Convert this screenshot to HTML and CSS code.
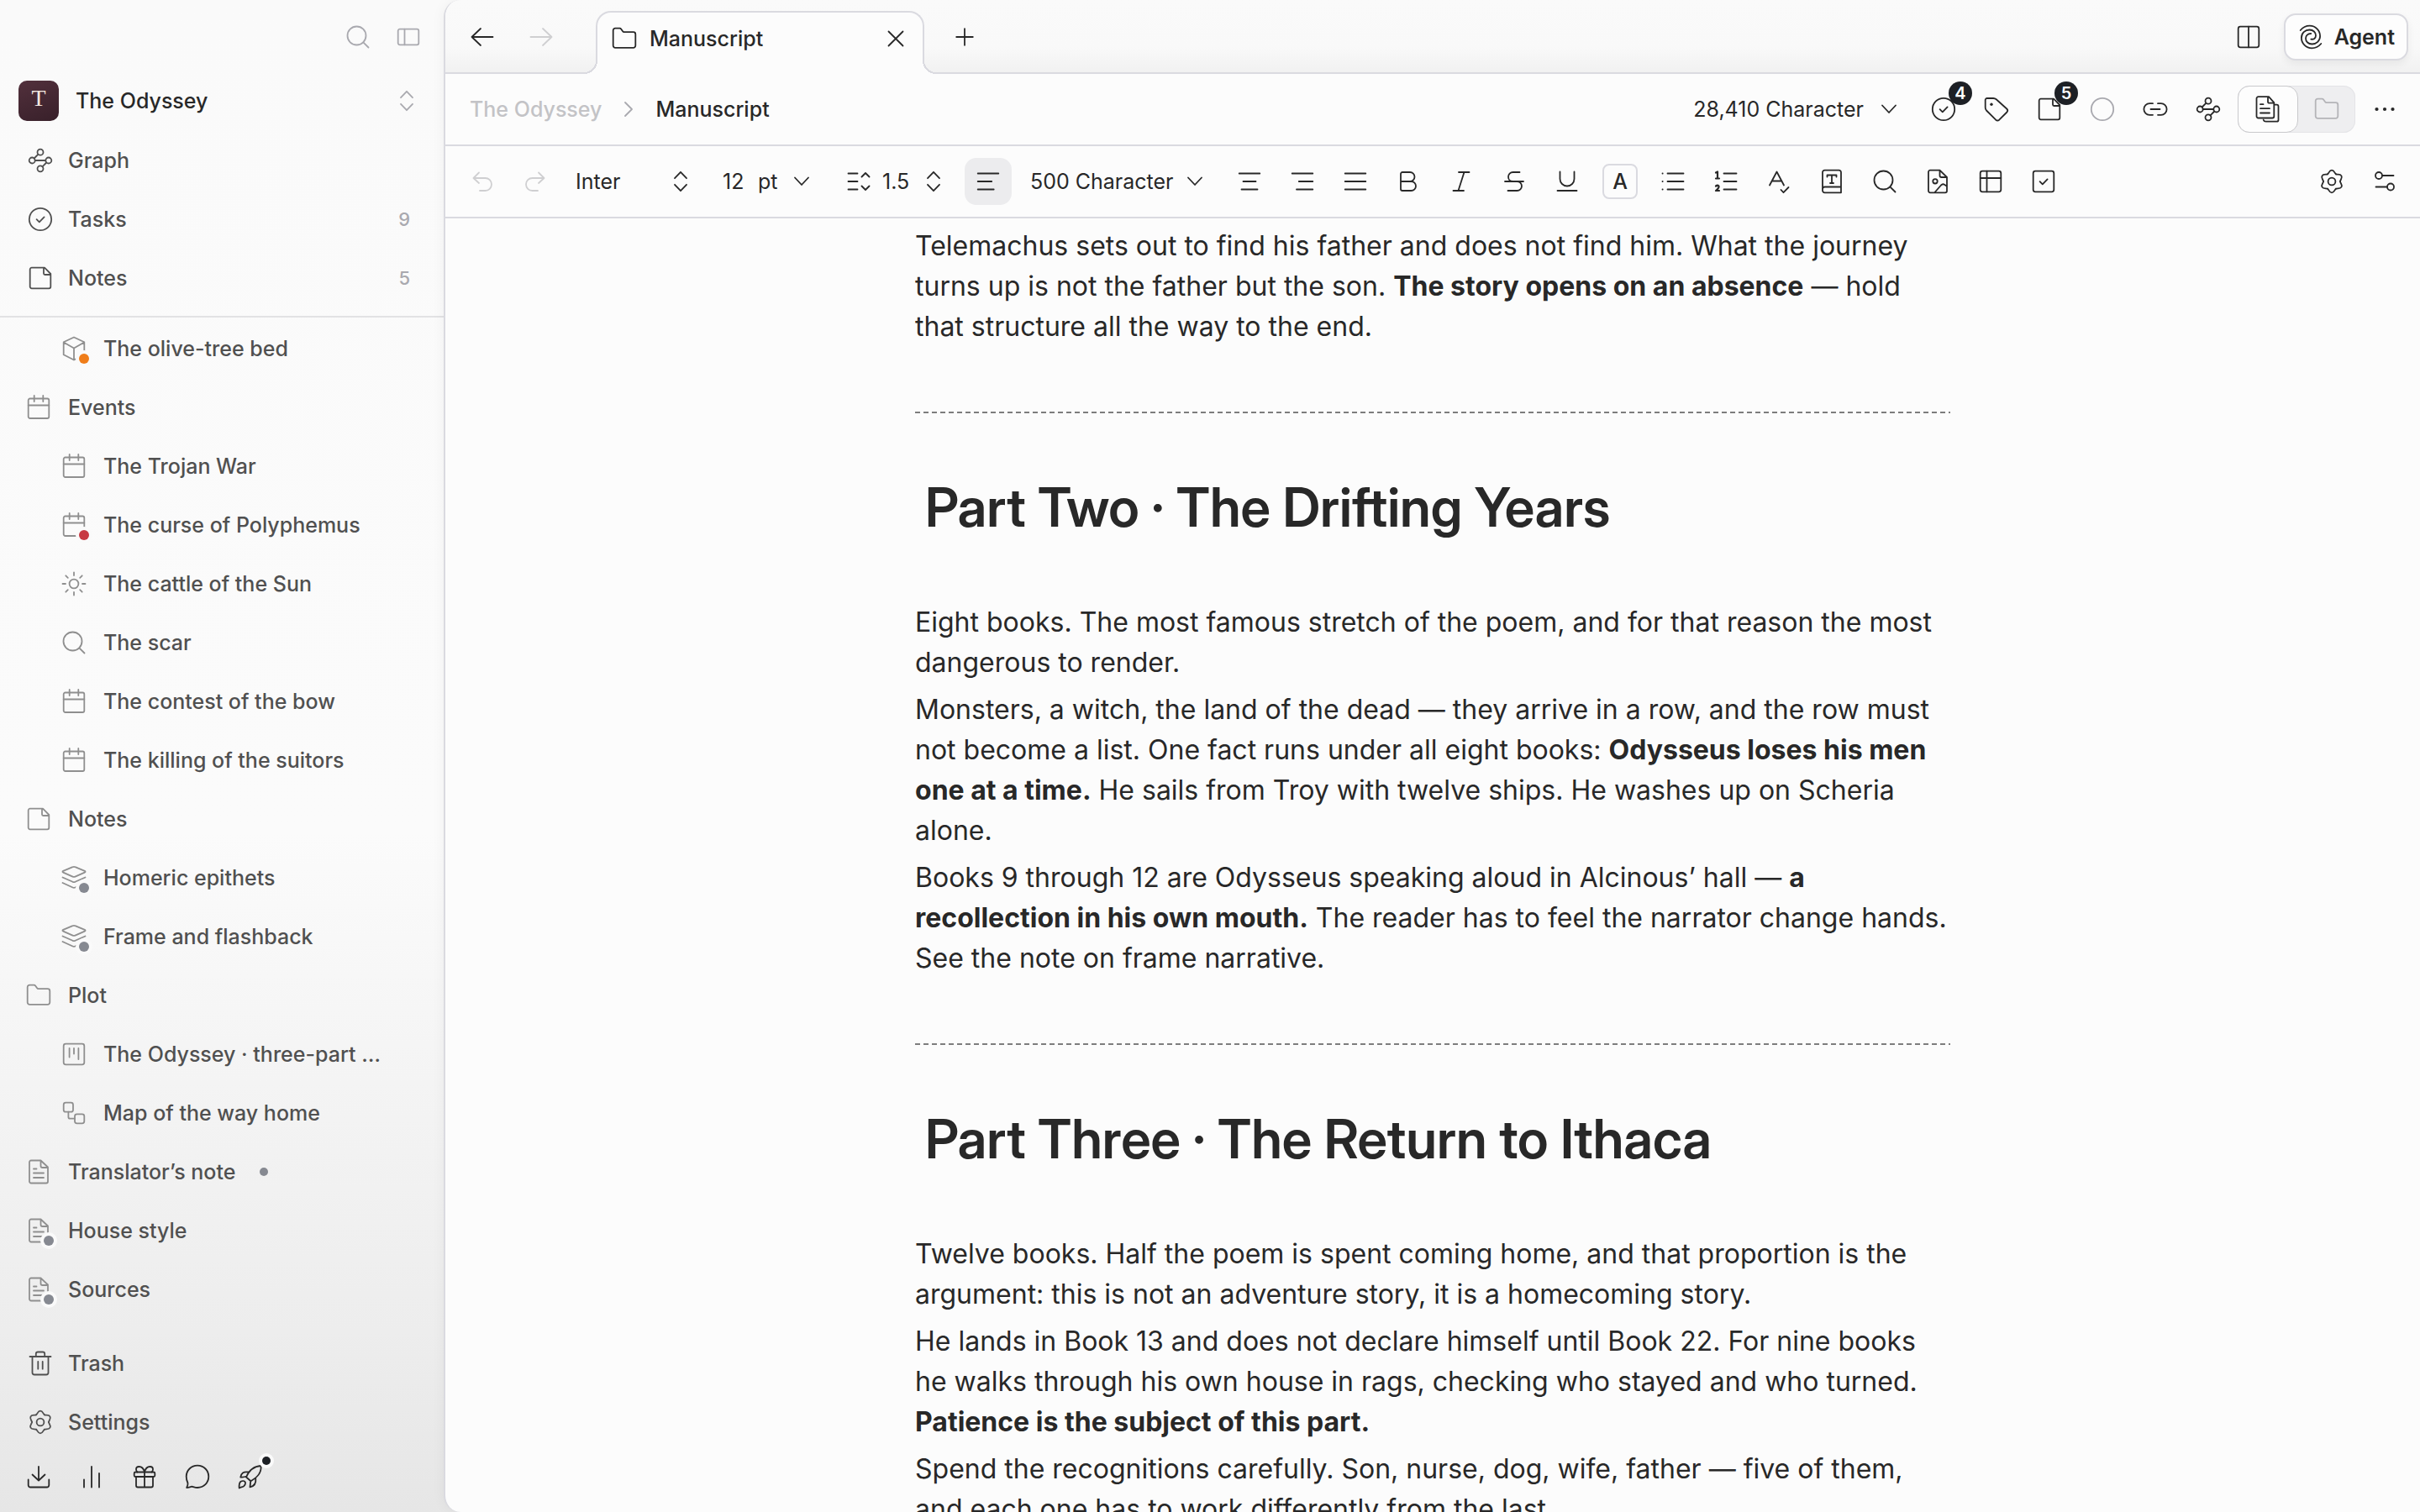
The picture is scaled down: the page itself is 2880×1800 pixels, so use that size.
FILE: index.html
```html
<!DOCTYPE html>
<html lang="en">
<head>
    <meta charset="UTF-8">
    <title>Manuscript - The Odyssey</title>
    <link rel="stylesheet" href="styles.css">
</head>
<body>
<!-- icon set -->
<svg class="sprite" aria-hidden="true">
    <symbol id="i-search" viewBox="0 0 32 32"><circle cx="14.5" cy="14.5" r="11"/><path d="M22.3 22.3l6.2 6.2"/></symbol>
    <symbol id="i-panel" viewBox="0 0 32 32"><rect x="3.7" y="6.7" width="24.6" height="18.6" rx="2"/><path d="M11.5 6.7v18.6"/></symbol>
    <symbol id="i-split" viewBox="0 0 32 32"><rect x="3.7" y="3.7" width="24.6" height="24.6" rx="2.5"/><path d="M16 3.7v24.6"/></symbol>
    <symbol id="i-updown" viewBox="0 0 32 32"><path d="M9 12.2l7-7.4 7 7.4M9 19.8l7 7.4 7-7.4"/></symbol>
    <symbol id="i-down" viewBox="0 0 32 32"><path d="M8 11.5l8 8.5 8-8.5"/></symbol>
    <symbol id="i-right" viewBox="0 0 32 32"><path d="M12 8l8 8-8 8"/></symbol>
    <symbol id="i-graph" viewBox="0 0 32 32"><circle cx="16" cy="6.2" r="3.5"/><circle cx="6.2" cy="16" r="3.5"/><circle cx="25.8" cy="16" r="3.5"/><circle cx="16" cy="25.8" r="3.5"/><path d="M8.7 13.5l4.8-4.8M9.7 16h12.6M18.5 23.3l4.8-4.8"/></symbol>
    <symbol id="i-task" viewBox="0 0 32 32"><circle cx="16" cy="16" r="13.2"/><path d="M11.6 16.2l3.2 3.2 5.8-6"/></symbol>
    <symbol id="i-note" viewBox="0 0 32 32"><path d="M5.7 3.7H21l7.3 7.3v15.3a2 2 0 0 1-2 2H5.7a2 2 0 0 1-2-2V5.7a2 2 0 0 1 2-2zM20 3.7v6.8A1.5 1.5 0 0 0 21.5 12H28"/></symbol>
    <symbol id="i-cube" viewBox="0 0 32 32"><path d="M16 2.5l12.3 5.8v15L16 29.5 3.7 23.3v-15zM3.7 8.5L16 15.5l12.3-7M16 15.5v14"/></symbol>
    <symbol id="i-calendar" viewBox="0 0 32 32"><rect x="3.7" y="5.5" width="24.6" height="23.5" rx="2"/><path d="M3.7 13.5h24.6M10.7 2v7M21.3 2v7"/></symbol>
    <symbol id="i-sun" viewBox="0 0 32 32"><circle cx="16" cy="16" r="5.4"/><path d="M16 2.5v3.5M16 26v3.5M2.5 16H6M26 16h3.5M6.3 6.3l2.5 2.5M23.2 23.2l2.5 2.5M6.3 25.7l2.5-2.5M23.2 8.8l2.5-2.5"/></symbol>
    <symbol id="i-layers" viewBox="0 0 32 32"><path d="M14.5 3.2q1.5-.7 3 0l11.3 4.6q1.5.9 0 1.8l-11.3 5q-1.5.7-3 0L3.2 9.6q-1.5-.9 0-1.8zM2.5 15.5l12 5.3q1.5.6 3 0l12-5.3M2.5 22l12 5.5q1.5.7 3 0l12-5.5"/></symbol>
    <symbol id="i-folder" viewBox="0 0 32 32"><path d="M2.7 6.2a2.5 2.5 0 0 1 2.5-2.5h5.3a2 2 0 0 1 1.6.8l2 2.8a2 2 0 0 0 1.6.9h11.1a2.5 2.5 0 0 1 2.5 2.5v13.6a2.5 2.5 0 0 1-2.5 2.5H5.2a2.5 2.5 0 0 1-2.5-2.5z"/></symbol>
    <symbol id="i-board" viewBox="0 0 32 32"><rect x="3.7" y="3.7" width="24.6" height="24.6" rx="2.5"/><path d="M10.6 9v10.5M16 9v6.5M21.4 9v13"/></symbol>
    <symbol id="i-flow" viewBox="0 0 32 32"><rect x="3.7" y="3.7" width="11.3" height="11" rx="2.5"/><rect x="17" y="17.3" width="11.3" height="11" rx="2.5"/><path d="M9.4 14.7v6a2 2 0 0 0 2 2H17"/></symbol>
    <symbol id="i-doc" viewBox="0 0 32 32"><path d="M7 2.5h11.5l8.5 8v17a2 2 0 0 1-2 2H7a2 2 0 0 1-2-2v-23a2 2 0 0 1 2-2zM18.500 2.500v6.500a2 2 0 0 0 2 2H27M10 12.500h3.500M10 17.500h12M10 23h12"/></symbol>
    <symbol id="i-docs" viewBox="0 0 32 32"><path d="M4.500 1.200H17l6.300 7v16.300a2 2 0 0 1-2 2H4.500a2 2 0 0 1-2-2V3.200a2 2 0 0 1 2-2zM16 1.200v6A1.500 1.500 0 0 0 17.500 8.700h5.500M7 10.200h3.500M7 15.200h11M7 20.500h11M24.500 10.700h2a2 2 0 0 1 2 2v16a2 2 0 0 1-2 2H13.500a3 3 0 0 1-2.800-2"/></symbol>
    <symbol id="i-trash" viewBox="0 0 32 32"><path d="M3.500 8h25M10.800 8V4.800a2.300 2.300 0 0 1 2.300-2.300h5.800a2.300 2.300 0 0 1 2.300 2.300V8M6.500 8v19a2.500 2.500 0 0 0 2.500 2.500h14a2.500 2.500 0 0 0 2.500-2.500V8M13.300 14v8.700M18.700 14v8.700"/></symbol>
    <symbol id="i-gear" viewBox="0 0 32 32"><circle cx="16" cy="16" r="4.400"/><g transform="translate(16 16)">
        <path d="M-5-8.660C-3.300-9.700-3-13.300 0-13.300S3.300-9.700 5-8.660"/>
        <path transform="rotate(60)" d="M-5-8.660C-3.300-9.700-3-13.300 0-13.300S3.300-9.700 5-8.660"/>
        <path transform="rotate(120)" d="M-5-8.660C-3.300-9.700-3-13.300 0-13.300S3.300-9.700 5-8.660"/>
        <path transform="rotate(180)" d="M-5-8.660C-3.300-9.700-3-13.300 0-13.300S3.300-9.700 5-8.660"/>
        <path transform="rotate(240)" d="M-5-8.660C-3.300-9.700-3-13.300 0-13.300S3.300-9.700 5-8.660"/>
        <path transform="rotate(300)" d="M-5-8.660C-3.300-9.700-3-13.300 0-13.300S3.300-9.700 5-8.660"/></g></symbol>
    <symbol id="i-download" viewBox="0 0 32 32"><path d="M16 4v16M8.500 13.500L16 20.500l7.500-7M3.700 19.500v6.500a2.500 2.500 0 0 0 2.500 2.500h19.600a2.500 2.500 0 0 0 2.500-2.500v-6.500"/></symbol>
    <symbol id="i-bars" viewBox="0 0 32 32"><path d="M7 19.500v9M16 4v24.500M25 12v16.500"/></symbol>
    <symbol id="i-gift" viewBox="0 0 32 32"><rect x="3.700" y="10.500" width="24.600" height="5.500" rx="1.500"/><path d="M6 16v10.500a2 2 0 0 0 2 2h16a2 2 0 0 0 2-2V16M16 10.500v18M16 10.500c-1-4-3-6.500-6.500-6.500C7 4 6 5.500 6 7.200c0 1.500.6 2.500 1.500 3.300M16 10.500c1-4 3-6.500 6.500-6.500C25 4 26 5.500 26 7.200c0 1.500-.6 2.500-1.500 3.300"/></symbol>
    <symbol id="i-chat" viewBox="0 0 32 32"><path d="M16 2.700c7.500 0 13.300 5.800 13.300 13.100S23.500 29 16 29c-2.600 0-4.500-.8-6.500-1.300-2 .2-3.800 1.300-6.300 1.300 1-2 1.600-3.700 1.300-5.500C3.400 21.200 2.700 18.800 2.700 15.800 2.700 8.500 8.500 2.700 16 2.700z"/></symbol>
    <symbol id="i-rocket" viewBox="0 0 32 32"><path d="M11 16.500C14 9.500 20 3.500 28.500 3c1 8-5 14.500-12 18.200zM11.500 15.500c-2 .8-4.500 1.300-7.200 1C5 12 7.500 9.500 13.500 10.500M16.300 21l-.8 7.300C20 27.500 23 25 22.300 18M4.500 21.700c2-1 4.500-.6 5.300.8.700 1.500-.3 4-2 5C6 28.400 4 28.500 2.700 29.500 2.500 27 2.800 23 4.500 21.700z"/></symbol>
    <symbol id="i-back" viewBox="0 0 32 32"><path d="M28.500 16h-25M14 6L3.500 16 14 26"/></symbol>
    <symbol id="i-forward" viewBox="0 0 32 32"><path d="M3.500 16h25M18 6l10.500 10L18 26"/></symbol>
    <symbol id="i-close" viewBox="0 0 32 32"><path d="M7.500 7.500l17 17M24.500 7.500l-17 17"/></symbol>
    <symbol id="i-plus" viewBox="0 0 32 32"><path d="M16 6.200v19.600M6.200 16h19.600"/></symbol>
    <symbol id="i-spiral" viewBox="0 0 32 32"><path d="M3.700 8C6.700 4.500 10.500 2.700 14.700 2.700c7 0 12.400 5.600 12.400 12.400 0 5.400-4.300 9.400-9.600 9.400-4.500 0-7.500-3-7.500-6.800 0-3.200 2.500-5.700 6.200-5.700M28.300 24c-3 3.500-6.800 5.300-11 5.300-7 0-12.400-5.600-12.400-12.400 0-5.400 4.300-9.400 9.600-9.400 4.500 0 7.500 3 7.500 6.800 0 3.200-2.500 5-5.700 4.300"/></symbol>
    <symbol id="i-tag" viewBox="0 0 32 32"><path d="M2.700 5A2 2 0 0 1 4.700 3h7.500q2 0 3.500 1.300l12.500 11.200q2 2 .2 4l-9.200 9.200q-2 1.700-4 0L4 17.500q-1.300-1.500-1.300-3.500z"/><circle class="solid" cx="10" cy="10.300" r="1.700"/></symbol>
    <symbol id="i-circle" viewBox="0 0 32 32"><circle cx="16" cy="16" r="13.200"/></symbol>
    <symbol id="i-link" viewBox="0 0 32 32"><path d="M13 22.800H9.200a6.600 6.600 0 0 1 0-13.600H13M19 9.200h3.800a6.600 6.600 0 0 1 0 13.600H19M10.500 16h11"/></symbol>
    <symbol id="i-dots" viewBox="0 0 32 32"><circle class="solid" cx="6.500" cy="16" r="2.100"/><circle class="solid" cx="16" cy="16" r="2.100"/><circle class="solid" cx="25.500" cy="16" r="2.100"/></symbol>
    <symbol id="i-undo" viewBox="0 0 32 32"><path d="M12 5.500L5.500 12l6.500 6M5.500 12h14a7.500 7.500 0 0 1 0 15H13"/></symbol>
    <symbol id="i-redo" viewBox="0 0 32 32"><path d="M20 5.500l6.500 6.500-6.500 6M26.500 12h-14a7.500 7.500 0 0 0 0 15H19"/></symbol>
    <symbol id="i-spacing" viewBox="0 0 32 32"><path d="M3.500 6.500h11M3.500 16h11M3.500 25.500h11M19.500 10.500l4.500-4.500 4.500 4.500M19.500 21.500l4.500 4.500 4.500-4.500"/></symbol>
    <symbol id="i-left" viewBox="0 0 32 32"><path d="M3.700 6.500h24.600M3.700 16h16.500M3.700 25.500h19"/></symbol>
    <symbol id="i-center" viewBox="0 0 32 32"><path d="M3.700 6.500h24.600M8.500 16h15M6.500 25.500h19"/></symbol>
    <symbol id="i-rightalign" viewBox="0 0 32 32"><path d="M3.700 6.500h24.600M11.800 16h16.500M9 25.500h19.300"/></symbol>
    <symbol id="i-justify" viewBox="0 0 32 32"><path d="M3.700 6.500h24.600M3.700 16h24.600M3.700 25.500h24.600"/></symbol>
    <symbol id="i-bold" viewBox="0 0 32 32"><path d="M7 16V7a2 2 0 0 1 2-2h9a5.500 5.500 0 0 1 0 11H7zM7 16v9a2 2 0 0 0 2 2h10.500a5.500 5.500 0 0 0 0-11H16"/></symbol>
    <symbol id="i-italic" viewBox="0 0 32 32"><path d="M13 5h12.500M6.500 27H19M19.500 5l-7 22"/></symbol>
    <symbol id="i-strike" viewBox="0 0 32 32"><path d="M22.500 5h-8a5.500 5.500 0 0 0-5.500 5.500c0 3.500 2.500 5.500 5.500 5.500M5 16h22M19.500 16a5.500 5.500 0 0 1 0 11H8.500"/></symbol>
    <symbol id="i-underline" viewBox="0 0 32 32"><path d="M7.500 4.500v8.500a8.500 8.500 0 0 0 17 0V4.500M4.500 27h23"/></symbol>
    <symbol id="i-bullets" viewBox="0 0 32 32"><path d="M9.500 6.500h19M9.500 16h19M9.500 25.500h19M3.500 6.500h.2M3.500 16h.2M3.500 25.500h.2"/></symbol>
    <symbol id="i-numbers" viewBox="0 0 32 32"><path d="M13.500 6.500h15M13.500 16h15M13.500 25.500h15"/><path class="bold" d="M4 5.500L6 4.500v8M4 12.500h4M4 21.500q2-1.500 3.500 0 .7 2-3.500 5.500h4"/></symbol>
    <symbol id="i-spell" viewBox="0 0 32 32"><path d="M5 20.500l8.500-16L22 20.500M8 15.500h11M18.500 26l3 3.200 6-6.200"/></symbol>
    <symbol id="i-dictionary" viewBox="0 0 32 32"><path d="M7.500 2.700h17a2.500 2.500 0 0 1 2.500 2.500v24.100H7.500A2.500 2.500 0 0 1 5 26.800V5.200a2.500 2.500 0 0 1 2.500-2.500zM27 22.500H7.500A2.500 2.500 0 0 0 5 25M10.500 10.500V8.500h11v2M16 8.500v9.500M14 18h4"/></symbol>
    <symbol id="i-image" viewBox="0 0 32 32"><path d="M7 2.700h11.500l8.500 8.300v16.300a2 2 0 0 1-2 2H7a2 2 0 0 1-2-2V4.700a2 2 0 0 1 2-2zM18.500 2.700v6.300a2 2 0 0 0 2 2H27M12.500 29l7.500-8.500q2-2 4-.7l3 2"/><circle cx="13" cy="15.800" r="2.700"/></symbol>
    <symbol id="i-table" viewBox="0 0 32 32"><rect x="3.700" y="3.700" width="24.600" height="24.600" rx="2.500"/><path d="M11.500 3.700v24.600M3.700 12h24.600"/></symbol>
    <symbol id="i-check" viewBox="0 0 32 32"><rect x="3.700" y="3.700" width="24.600" height="24.600" rx="2.500"/><path d="M11.600 16.200l3.200 3.200 5.800-6"/></symbol>
    <symbol id="i-sliders" viewBox="0 0 32 32"><circle cx="9" cy="9" r="4"/><circle cx="23" cy="22.500" r="4"/><path d="M13 9h13.500M5.500 22.500H19"/></symbol>
</svg>

<div class="app">
    <aside class="sidebar">
        <div class="side-top">
            <button class="btn" aria-label="Search"><svg class="icon"><use href="#i-search"/></svg></button>
            <button class="btn" aria-label="Toggle sidebar"><svg class="icon"><use href="#i-panel"/></svg></button>
        </div>
        <button class="workspace">
            <span class="logo">T</span>
            <span class="workspace-name">The Odyssey</span>
            <svg class="icon"><use href="#i-updown"/></svg>
        </button>
        <nav class="menu pinned">
            <a href="#"><svg class="icon"><use href="#i-graph"/></svg>Graph</a>
            <a href="#"><svg class="icon"><use href="#i-task"/></svg>Tasks<span class="count">9</span></a>
            <a href="#"><svg class="icon"><use href="#i-note"/></svg>Notes<span class="count">5</span></a>
        </nav>
        <nav class="menu tree">
            <a class="child" href="#"><span class="mark orange"><svg class="icon"><use href="#i-cube"/></svg></span><span class="name">The olive-tree bed</span></a>
            <a href="#"><svg class="icon"><use href="#i-calendar"/></svg><span class="name">Events</span></a>
            <a class="child" href="#"><svg class="icon"><use href="#i-calendar"/></svg><span class="name">The Trojan War</span></a>
            <a class="child" href="#"><span class="mark red"><svg class="icon"><use href="#i-calendar"/></svg></span><span class="name">The curse of Polyphemus</span></a>
            <a class="child" href="#"><svg class="icon"><use href="#i-sun"/></svg><span class="name">The cattle of the Sun</span></a>
            <a class="child" href="#"><svg class="icon"><use href="#i-search"/></svg><span class="name">The scar</span></a>
            <a class="child" href="#"><svg class="icon"><use href="#i-calendar"/></svg><span class="name">The contest of the bow</span></a>
            <a class="child" href="#"><svg class="icon"><use href="#i-calendar"/></svg><span class="name">The killing of the suitors</span></a>
            <a href="#"><svg class="icon"><use href="#i-note"/></svg><span class="name">Notes</span></a>
            <a class="child" href="#"><span class="mark"><svg class="icon"><use href="#i-layers"/></svg></span><span class="name">Homeric epithets</span></a>
            <a class="child" href="#"><span class="mark"><svg class="icon"><use href="#i-layers"/></svg></span><span class="name">Frame and flashback</span></a>
            <a href="#"><svg class="icon"><use href="#i-folder"/></svg><span class="name">Plot</span></a>
            <a class="child" href="#"><svg class="icon"><use href="#i-board"/></svg><span class="name">The Odyssey · three-part …</span></a>
            <a class="child" href="#"><svg class="icon"><use href="#i-flow"/></svg><span class="name">Map of the way home</span></a>
            <a href="#"><svg class="icon"><use href="#i-doc"/></svg><span class="name">Translator’s note</span><span class="dot"></span></a>
            <a href="#"><span class="mark"><svg class="icon"><use href="#i-doc"/></svg></span><span class="name">House style</span></a>
            <a href="#"><span class="mark"><svg class="icon"><use href="#i-doc"/></svg></span><span class="name">Sources</span></a>
        </nav>
        <nav class="menu">
            <a href="#"><svg class="icon"><use href="#i-trash"/></svg>Trash</a>
            <a href="#"><svg class="icon"><use href="#i-gear"/></svg>Settings</a>
        </nav>
        <div class="side-bottom">
            <button class="btn" aria-label="Export"><svg class="icon"><use href="#i-download"/></svg></button>
            <button class="btn" aria-label="Statistics"><svg class="icon"><use href="#i-bars"/></svg></button>
            <button class="btn" aria-label="Gift"><svg class="icon"><use href="#i-gift"/></svg></button>
            <button class="btn" aria-label="Feedback"><svg class="icon"><use href="#i-chat"/></svg></button>
            <button class="btn news" aria-label="What's new"><svg class="icon"><use href="#i-rocket"/></svg></button>
        </div>
    </aside>

    <main class="panel">
        <header class="tabs">
            <button class="btn" aria-label="Back"><svg class="icon"><use href="#i-back"/></svg></button>
            <button class="btn faint" aria-label="Forward" disabled><svg class="icon"><use href="#i-forward"/></svg></button>
            <div class="tab">
                <svg class="icon"><use href="#i-folder"/></svg>
                <span class="tab-name">Manuscript</span>
                <button class="btn-close" aria-label="Close tab"><svg class="icon"><use href="#i-close"/></svg></button>
            </div>
            <button class="btn" aria-label="New tab"><svg class="icon"><use href="#i-plus"/></svg></button>
            <div class="push">
                <button class="btn" aria-label="Split view"><svg class="icon"><use href="#i-split"/></svg></button>
                <button class="agent"><svg class="icon"><use href="#i-spiral"/></svg>Agent</button>
            </div>
        </header>

        <div class="bar crumbs">
            <a class="crumb" href="#">The Odyssey</a>
            <svg class="icon crumb-sep"><use href="#i-right"/></svg>
            <span class="current">Manuscript</span>
            <button class="total">28,410 Character<svg class="icon"><use href="#i-down"/></svg></button>
            <button class="btn" aria-label="Tasks, 4"><svg class="icon"><use href="#i-task"/></svg><span class="badge">4</span></button>
            <button class="btn" aria-label="Tags"><svg class="icon"><use href="#i-tag"/></svg></button>
            <button class="btn" aria-label="Notes, 5"><svg class="icon"><use href="#i-note"/></svg><span class="badge">5</span></button>
            <button class="btn muted" aria-label="Status"><svg class="icon"><use href="#i-circle"/></svg></button>
            <button class="btn" aria-label="Copy link"><svg class="icon"><use href="#i-link"/></svg></button>
            <button class="btn" aria-label="Graph"><svg class="icon"><use href="#i-graph"/></svg></button>
            <div class="toggle">
                <button class="on" aria-label="Document view"><svg class="icon"><use href="#i-docs"/></svg></button>
                <button aria-label="Folder view"><svg class="icon"><use href="#i-folder"/></svg></button>
            </div>
            <button class="btn" aria-label="More"><svg class="icon"><use href="#i-dots"/></svg></button>
        </div>

        <div class="bar tools">
            <button class="btn faint" aria-label="Undo" disabled><svg class="icon"><use href="#i-undo"/></svg></button>
            <button class="btn faint" aria-label="Redo" disabled><svg class="icon"><use href="#i-redo"/></svg></button>
            <div class="pick font">
                <select aria-label="Font"><option>Inter</option></select>
                <svg class="icon"><use href="#i-updown"/></svg>
            </div>
            <div class="size">
                <input type="text" aria-label="Font size" value="12">
                <div class="pick unit">
                    <select aria-label="Unit"><option>pt</option></select>
                    <svg class="icon"><use href="#i-down"/></svg>
                </div>
            </div>
            <div class="spacing">
                <svg class="icon"><use href="#i-spacing"/></svg>
                <div class="pick lines">
                    <select aria-label="Line height"><option>1.5</option></select>
                    <svg class="icon"><use href="#i-updown"/></svg>
                </div>
            </div>
            <button class="btn pressed" aria-label="Align left"><svg class="icon"><use href="#i-left"/></svg></button>
            <div class="pick length">
                <select aria-label="Length"><option>500 Character</option></select>
                <svg class="icon"><use href="#i-down"/></svg>
            </div>
            <button class="btn" aria-label="Align center"><svg class="icon"><use href="#i-center"/></svg></button>
            <button class="btn" aria-label="Align right"><svg class="icon"><use href="#i-rightalign"/></svg></button>
            <button class="btn" aria-label="Justify"><svg class="icon"><use href="#i-justify"/></svg></button>
            <button class="btn" aria-label="Bold"><svg class="icon"><use href="#i-bold"/></svg></button>
            <button class="btn" aria-label="Italic"><svg class="icon"><use href="#i-italic"/></svg></button>
            <button class="btn" aria-label="Strikethrough"><svg class="icon"><use href="#i-strike"/></svg></button>
            <button class="btn" aria-label="Underline"><svg class="icon"><use href="#i-underline"/></svg></button>
            <button class="btn" aria-label="Text color"><span class="letter">A</span></button>
            <button class="btn" aria-label="Bullet list"><svg class="icon"><use href="#i-bullets"/></svg></button>
            <button class="btn" aria-label="Numbered list"><svg class="icon"><use href="#i-numbers"/></svg></button>
            <button class="btn" aria-label="Spelling"><svg class="icon"><use href="#i-spell"/></svg></button>
            <button class="btn" aria-label="Dictionary"><svg class="icon"><use href="#i-dictionary"/></svg></button>
            <button class="btn" aria-label="Find"><svg class="icon"><use href="#i-search"/></svg></button>
            <button class="btn" aria-label="Insert image"><svg class="icon"><use href="#i-image"/></svg></button>
            <button class="btn" aria-label="Insert table"><svg class="icon"><use href="#i-table"/></svg></button>
            <button class="btn" aria-label="Checklist"><svg class="icon"><use href="#i-check"/></svg></button>
            <div class="push">
                <button class="btn" aria-label="Editor settings"><svg class="icon"><use href="#i-gear"/></svg></button>
                <button class="btn" aria-label="Toolbar options"><svg class="icon"><use href="#i-sliders"/></svg></button>
            </div>
        </div>

        <div class="scroll">
            <article class="page">
                <p>Telemachus sets out to find his father and does not find him. What the journey turns up is not the father but the son. <b>The story opens on an absence</b> — hold that structure all the way to the end.</p>
                <hr>
                <h1>Part Two · The Drifting Years</h1>
                <p>Eight books. The most famous stretch of the poem, and for that reason the most dangerous to render.</p>
                <p>Monsters, a witch, the land of the dead — they arrive in a row, and the row must not become a list. One fact runs under all eight books: <b>Odysseus loses his men one at a time.</b> He sails from Troy with twelve ships. He washes up on Scheria alone.</p>
                <p>Books 9 through 12 are Odysseus speaking aloud in Alcinous’ hall — <b>a recollection in his own mouth.</b> The reader has to feel the narrator change hands. See the note on frame narrative.</p>
                <hr>
                <h1>Part Three · The Return to Ithaca</h1>
                <p>Twelve books. Half the poem is spent coming home, and that proportion is the argument: this is not an adventure story, it is a homecoming story.</p>
                <p>He lands in Book 13 and does not declare himself until Book 22. For nine books he walks through his own house in rags, checking who stayed and who turned. <b>Patience is the subject of this part.</b></p>
                <p>Spend the recognitions carefully. Son, nurse, dog, wife, father — five of them, and each one has to work differently from the last.</p>
            </article>
        </div>
    </main>
</div>
</body>
</html>
```
FILE: styles.css
```css
* {
    margin: 0;
    padding: 0;
    box-sizing: border-box;
}

body {
    font-family: Inter, "Liberation Sans", sans-serif;
    font-size: 25px;
    color: #282828;
    background-color: #fafafa;
}

a {
    color: inherit;
    text-decoration: none;
}

button,
select,
input {
    border: 0;
    background: none;
    font: inherit;
    color: inherit;
    cursor: pointer;
}

.sprite {
    position: absolute;
    width: 0;
    height: 0;
}

.icon {
    display: block;
    flex: none;
    width: 32px;
    height: 32px;
    fill: none;
    stroke: currentColor;
    stroke-width: 1.8;
    stroke-linecap: round;
    stroke-linejoin: round;
}

.solid {
    fill: currentColor;
    stroke: none;
}

.bold {
    stroke-width: 2.2;
}

.btn {
    display: flex;
    flex: none;
    align-items: center;
    justify-content: center;
    position: relative;
    width: 56px;
    height: 56px;
    border-radius: 14px;
}

.faint {
    color: #cfcfd1;
}

.muted {
    color: #a9a9af;
}

.push {
    display: flex;
    align-items: center;
    margin-left: auto;
    gap: 7px;
}

.app {
    display: flex;
    height: 100vh;
    overflow: hidden;
    background: linear-gradient(#fafafa, #fbfbfb 55%, #ededed 88%, #e6e6e6);
}

/* sidebar */
.sidebar {
    display: flex;
    flex: none;
    flex-direction: column;
    width: 528px;
    color: #505050;
    font-weight: 500;
}

.side-top {
    display: flex;
    align-items: center;
    justify-content: flex-end;
    gap: 4px;
    height: 88px;
    padding-right: 14px;
    color: #a9a9af;
}

.workspace {
    display: flex;
    align-items: center;
    height: 64px;
    margin-bottom: 4px;
    padding: 0 28px 0 22px;
    color: #282828;
    text-align: left;
}

.workspace .icon {
    color: #a9a9af;
}

.logo {
    width: 48px;
    height: 48px;
    border-radius: 10px;
    background: linear-gradient(160deg, #52303c, #38202a);
    color: #f3e9e0;
    font-family: "Liberation Serif", serif;
    font-size: 28px;
    line-height: 42px;
    text-align: center;
}

.workspace-name {
    flex: 1;
    padding-left: 20px;
}

.menu a {
    display: flex;
    align-items: center;
    gap: 17px;
    height: 70px;
    padding: 0 40px 0 32px;
}

.pinned {
    padding-bottom: 10px;
    border-bottom: 2px solid #e2e2e4;
}

.count {
    margin-left: auto;
    color: #a9a9af;
    font-size: 22px;
}

.tree {
    flex: 1;
    padding-top: 2px;
    overflow: hidden;
}

.menu.tree a {
    gap: 19px;
    padding-left: 30px;
}

.menu.tree .child {
    padding-left: 72px;
}

.tree .icon {
    color: #8f8f8f;
}

.name {
    white-space: nowrap;
}

.mark {
    position: relative;
}

.mark::after,
.news::after {
    content: "";
    position: absolute;
    right: -2px;
    bottom: -2px;
    width: 12px;
    height: 12px;
    border-radius: 50%;
    background-color: #868991;
    box-shadow: 0 0 0 4px #fafafa;
}

.orange::after {
    background-color: #ef7d1a;
}

.red::after {
    background-color: #c73a42;
}

.dot {
    width: 10px;
    height: 10px;
    margin-left: 10px;
    border-radius: 50%;
    background-color: #868991;
}

.side-bottom {
    display: flex;
    gap: 7px;
    padding: 2px 0 14px 18px;
    color: #282828;
}

.news::after {
    top: 4px;
    right: 4px;
    width: 10px;
    height: 10px;
    background-color: #1d2025;
}

/* main panel */
.panel {
    display: flex;
    flex: 1;
    flex-direction: column;
    min-width: 0;
    border-left: 2px solid #dadae0;
    border-radius: 20px 0 0 20px;
    background-color: #fcfcfc;
    box-shadow: 0 0 16px rgba(0, 0, 0, .05);
    overflow: hidden;
}

.tabs {
    display: flex;
    flex: none;
    align-items: center;
    height: 88px;
    padding: 2px 14px 0 16px;
    border-bottom: 2px solid #dadae0;
    background: linear-gradient(#fafafa, #f9f9f9 65%, #f1f1f1);
}

.tabs .btn + .btn {
    margin-left: 14px;
}

.tabs .push {
    gap: 14px;
}

.tab {
    display: flex;
    align-items: center;
    align-self: flex-end;
    gap: 14px;
    position: relative;
    width: 391px;
    height: 75px;
    margin: 0 20px -2px 37px;
    padding: 0 16px 12px 16px;
    border: 2px solid #dadae0;
    border-bottom: 0;
    border-radius: 18px 18px 0 0;
    background-color: #fcfcfc;
}

/* curved feet of the tab */
.tab::before,
.tab::after {
    content: "";
    position: absolute;
    bottom: 0;
    width: 16px;
    height: 16px;
}

.tab::before {
    left: -16px;
    background: radial-gradient(circle at 0 0, transparent 14px, #dadae0 14px 16px, #fcfcfc 16px);
}

.tab::after {
    right: -16px;
    background: radial-gradient(circle at 100% 0, transparent 14px, #dadae0 14px 16px, #fcfcfc 16px);
}

.tab-name {
    flex: 1;
    font-weight: 500;
}

.agent {
    display: flex;
    align-items: center;
    gap: 12px;
    height: 56px;
    padding: 0 14px;
    border: 2px solid #dadae0;
    border-radius: 14px;
    background-color: #fdfdfd;
    box-shadow: 0 4px 10px rgba(0, 0, 0, .06);
    font-weight: 600;
}

.bar {
    display: flex;
    flex: none;
    align-items: center;
    gap: 7px;
    height: 86px;
    padding: 0 14px 0 16px;
    border-bottom: 2px solid #dadae0;
}

.crumbs {
    padding-left: 29px;
    font-weight: 500;
}

.crumb {
    color: #c3c3c6;
}

.crumb-sep {
    margin: 0 9px;
    color: #a9a9af;
}

.total {
    display: flex;
    align-items: center;
    gap: 14px;
    margin-left: auto;
    margin-right: 14px;
    font-weight: 400;
}

.badge {
    position: absolute;
    top: -5px;
    right: -6px;
    width: 28px;
    height: 28px;
    border-radius: 50%;
    background-color: #1d2025;
    color: #fff;
    font-size: 20px;
    font-weight: 600;
    line-height: 28px;
    text-align: center;
}

.toggle {
    display: flex;
    height: 56px;
    border-radius: 14px;
    background-color: #eeeef0;
    box-shadow: inset 0 0 0 1px #e4e4e7;
    color: #b4b4b8;
}

.toggle button {
    display: flex;
    align-items: center;
    justify-content: center;
    width: 68px;
}

.toggle .on {
    width: 72px;
    border: 1px solid #c9c9cc;
    border-radius: 14px;
    background-color: #fdfdfd;
    color: #282828;
}

.pick {
    display: flex;
    align-items: center;
    position: relative;
}

.pick select {
    width: 100%;
    height: 56px;
    appearance: none;
}

.pick .icon {
    position: absolute;
    right: 0;
    pointer-events: none;
}

.font {
    width: 154px;
}

.font select {
    padding-left: 13px;
}

.size {
    display: flex;
    align-items: center;
    width: 137px;
    padding-left: 27px;
}

.size input {
    width: 42px;
}

.unit {
    flex: 1;
}

.spacing {
    display: flex;
    align-items: center;
    width: 150px;
    padding-left: 29px;
}

.lines {
    flex: 1;
}

.lines select {
    padding-left: 12px;
}

.pressed {
    margin-left: 14px;
    background-color: #ececee;
}

.length {
    width: 227px;
    margin-right: 14px;
}

.length select {
    padding-left: 15px;
}

.letter {
    width: 42px;
    height: 42px;
    border: 2px solid #dadae0;
    border-radius: 8px;
    font-weight: 500;
    line-height: 38px;
    text-align: center;
}

/* text */
.scroll {
    flex: 1;
    overflow: hidden;
}

.page {
    max-width: 1232px;
    margin: 0 auto;
    padding-top: 9px;
    font-size: 32px;
    line-height: 48px;
}

.page p {
    margin-bottom: 8px;
}

.page b {
    font-weight: 700;
}

.page hr {
    height: 2px;
    margin: 77px 0 64px;
    border: 0;
    background: repeating-linear-gradient(90deg, #7d7d7d 0 6px, #fcfcfc 6px 10px);
}

.page h1 {
    margin-bottom: 65px;
    padding-left: 12px;
    font-family: "Inter Display", Inter, "Liberation Sans", sans-serif;
    font-size: 64px;
    font-weight: 600;
    line-height: 96px;
}
```
